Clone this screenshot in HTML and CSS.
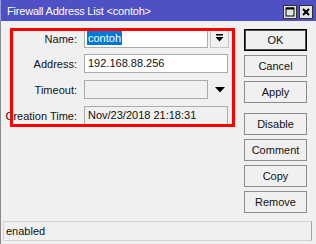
FILE: index.html
```html
<!DOCTYPE html>
<html>
<head>
    <title>Firewall Address List</title>
    <link rel="stylesheet" href="styles.css">
</head>
<body>
    <div class="window">
        <div class="titlebar">
            <span class="title">Firewall Address List &lt;contoh&gt;</span>
            <div class="title-buttons">
                <span class="tbtn">
                    <svg width="10" height="10" viewBox="0 0 10 10"><rect x="1" y="1" width="8" height="8" fill="none" stroke="#000" stroke-width="1"/><rect x="1" y="0.5" width="8" height="2" fill="#000"/></svg>
                </span>
                <span class="tbtn">
                    <svg width="10" height="10" viewBox="0 0 10 10"><path d="M2 2 L8 8 M8 2 L2 8" stroke="#000" stroke-width="2"/></svg>
                </span>
            </div>
        </div>

        <div class="content">
            <div class="form">
                <div class="row">
                    <label>Name:</label>
                    <div class="field short"><span class="selected">contoh</span></div>
                    <span class="dropbtn">
                        <svg width="9" height="9" viewBox="0 0 9 9"><rect x="1" y="0" width="7" height="1.5" fill="#000"/><path d="M0.5 3 L8.5 3 L4.5 7.5 Z" fill="#000"/></svg>
                    </span>
                </div>
                <div class="row">
                    <label>Address:</label>
                    <div class="field">192.168.88.256</div>
                </div>
                <div class="row">
                    <label>Timeout:</label>
                    <div class="field short readonly"></div>
                    <span class="droparrow">
                        <svg width="10" height="6" viewBox="0 0 10 6"><path d="M0 0 L10 0 L5 5.5 Z" fill="#000"/></svg>
                    </span>
                </div>
                <div class="row">
                    <label>Creation Time:</label>
                    <div class="field readonly">Nov/23/2018 21:18:31</div>
                </div>
                <!-- highlight drawn over the fields -->
                <div class="highlight"></div>
            </div>

            <div class="buttons">
                <button class="default">OK</button>
                <button>Cancel</button>
                <button>Apply</button>
                <button class="spaced">Disable</button>
                <button>Comment</button>
                <button>Copy</button>
                <button>Remove</button>
            </div>
        </div>

        <div class="statusbar">enabled</div>
    </div>
</body>
</html>
```

FILE: styles.css
```css
body {
    margin: 0;
    font-family: 'Liberation Sans', Arial, sans-serif;
    font-size: 11px;
    color: #111;
}
.window {
    width: 316px;
    height: 244px;
    background-color: #f0f0f0;
    display: flex;
    flex-direction: column;
    box-sizing: border-box;
    border-left: 1px solid #8a8a8a;
}
.titlebar {
    height: 21px;
    background-color: #4e50c4;
    display: flex;
    align-items: center;
    justify-content: space-between;
    padding: 0 3px 0 6px;
    margin-left: -1px;
    border-left: 1px solid #9a9ce0;
    flex-shrink: 0;
}
.title {
    color: white;
    font-size: 11px;
    letter-spacing: -0.2px;
}
.title-buttons {
    display: flex;
    gap: 2px;
    padding-top: 2px;
}
.tbtn {
    width: 12px;
    height: 12px;
    border: 1px solid #303030;
    background-color: #e4e4e4;
    display: flex;
    align-items: center;
    justify-content: center;
}
.content {
    display: flex;
    padding-top: 8px;
    flex: 1;
}
.form {
    position: relative;
    width: 228px;
    display: flex;
    flex-direction: column;
    gap: 7px;
}
.row {
    display: flex;
    align-items: center;
    height: 19px;
}
.row:first-child {
    margin-bottom: -1px;
}
.row label {
    width: 76px;
    flex-shrink: 0;
    display: flex;
    justify-content: flex-end;
    white-space: nowrap;
    margin-right: 7px;
}
.field {
    width: 144px;
    height: 19px;
    box-sizing: border-box;
    background: white;
    border: 1px solid #ababab;
    padding: 0 3px;
    line-height: 17px;
    white-space: nowrap;
}
.field.short {
    width: 124px;
}
.field.readonly {
    background-color: #f0f0f0;
}
.selected {
    background-color: #0078d7;
    color: white;
    margin-left: -1px;
    padding: 1px 1px;
}
.dropbtn {
    width: 19px;
    height: 18px;
    box-sizing: border-box;
    margin-left: 2px;
    border: 1px solid #c4c4c4;
    display: flex;
    align-items: center;
    justify-content: center;
}
.droparrow {
    margin-left: 7px;
    display: flex;
}
.highlight {
    position: absolute;
    left: 9px;
    top: -1px;
    width: 225px;
    height: 99px;
    box-sizing: border-box;
    border: 3px solid #ff0000;
}
.buttons {
    margin-left: 15px;
    display: flex;
    flex-direction: column;
    gap: 4px;
}
button {
    width: 63px;
    height: 22px;
    font-family: inherit;
    font-size: 11px;
    color: #111;
    background-color: #f0f0f0;
    border: 1px solid #8c8c8c;
    padding: 0;
}
button.default {
    border: 1px solid #000;
    box-shadow: inset 0 0 0 1px #505050;
}
button.spaced {
    margin-top: 6px;
}
.statusbar {
    margin: 0 4px 3px 2px;
    height: 20px;
    box-sizing: border-box;
    border: 1px solid #d4d4d4;
    border-right-color: #a0a0a0;
    padding-left: 2px;
    line-height: 19px;
}
```
